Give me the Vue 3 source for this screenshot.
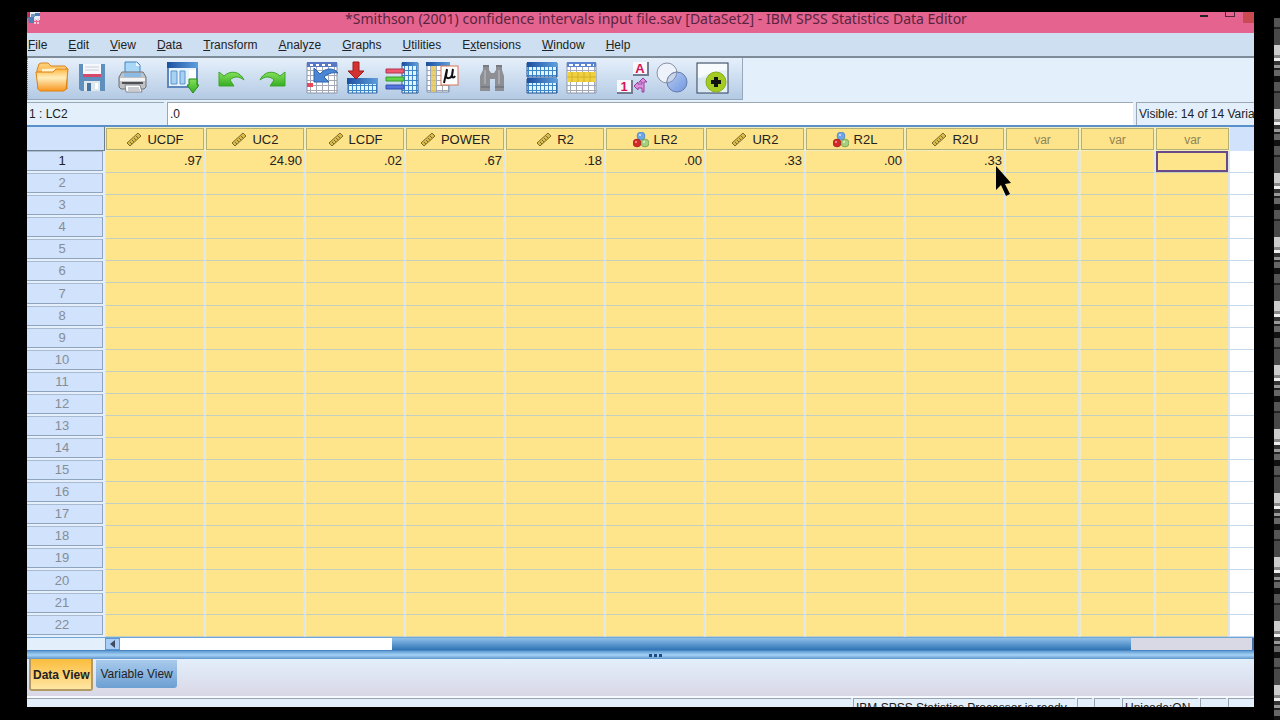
<template>
  <div class="stage">
    <main class="window">
      <header class="title">
        <svg class="title__icon" viewBox="0 0 14 14" aria-hidden="true">
          <rect width="4" height="6" fill="#c22f4c" />
          <rect x="3" width="10" height="8" fill="#e8eef8" />
          <path d="M1 5h6v6H2zM8 1h5v3H8z" fill="#4f7fb5" />
          <path d="M4 2h4v3H4z" fill="#7898c0" />
          <path d="M7 8h6M7 11h6" stroke="#f5c9d8" stroke-width="2" stroke-dasharray="2 1" />
        </svg>
        <h1 class="title__text">
          *Smithson (2001) confidence intervals input file.sav [DataSet2] - IBM SPSS Statistics Data Editor
        </h1>
        <button class="title__button" aria-label="Minimize"><span class="title__min"></span></button>
        <button class="title__button" aria-label="Maximize"><span class="title__max"></span></button>
        <button class="title__close" aria-label="Close"></button>
      </header>

      <nav class="menu">
        <button v-for="m in menus" :key="m.rest" class="menu__item">{{ m.pre }}<u>{{ m.key }}</u>{{ m.rest }}</button>
      </nav>

      <div class="tools">
        <div class="tools__bar">
          <div v-for="(group, g) in tools" :key="g" class="tools__group">
            <button v-for="tool in group" :key="tool.id" class="tools__button" :aria-label="tool.label">
              <svg class="tools__icon" viewBox="0 0 34 34">
                <use :href="`#${tool.id}`" />
              </svg>
            </button>
          </div>
        </div>
      </div>

      <div class="value">
        <label class="value__name" for="cell-value">1 : LC2</label>
        <input id="cell-value" v-model="cellValue" class="value__input" type="text" />
        <span class="value__visible">Visible: 14 of 14 Variables</span>
      </div>

      <table class="grid">
        <colgroup>
          <col class="grid__col-head" />
          <col v-for="c in columns" :key="c.name" class="grid__col" />
          <col v-for="n in 3" :key="n" class="grid__col-var" />
          <col />
        </colgroup>
        <thead>
          <tr>
            <th class="grid__corner"></th>
            <th v-for="c in columns" :key="c.name" class="grid__th" scope="col">
              <span class="grid__label">
                <svg class="grid__icon" viewBox="0 0 16 16" aria-hidden="true">
                  <use :href="c.nominal ? '#nominal' : '#scale'" />
                </svg>
                {{ c.name }}
              </span>
            </th>
            <th v-for="n in 3" :key="n" class="grid__th grid__th--var" scope="col">var</th>
            <th class="grid__th-rest"></th>
          </tr>
        </thead>
        <tbody>
          <tr v-for="row in 22" :key="row">
            <th :class="[{ 'grid__row--active': row === 1 }, 'grid__row']" scope="row">{{ row }}</th>
            <td v-for="(c, i) in columns" :key="c.name" class="grid__td">
              <template v-if="row === 1">{{ c.value }}</template>
              <svg v-if="row === 1 && i === columns.length - 1" class="pointer" viewBox="0 0 16 31" aria-hidden="true">
                <path d="M1 0v24l5-5 5 11 4-2-5-10 6-1z" fill="#000" />
              </svg>
            </td>
            <td v-for="n in 3" :key="n" :class="[{ 'grid__td--selected': row === 1 && n === 3 }, 'grid__td']"></td>
            <td class="grid__rest"></td>
          </tr>
        </tbody>
      </table>

      <div class="scroll">
        <button class="scroll__arrow" aria-label="Scroll left">
          <svg class="scroll__glyph" viewBox="0 0 6 8"><path d="M5 0v8L0 4z" fill="#3e4a5c" /></svg>
        </button>
        <div class="scroll__track"></div>
        <div class="scroll__thumb"></div>
        <div class="scroll__end"></div>
      </div>
      <div class="splitter"><i></i><i></i><i></i></div>

      <div class="tabs">
        <button class="tabs__tab tabs__tab--active">Data View</button>
        <button class="tabs__tab">Variable View</button>
      </div>

      <footer class="status">
        <span class="status__cell status__cell--fill"></span>
        <span class="status__cell status__cell--processor">IBM SPSS Statistics Processor is ready</span>
        <span class="status__cell status__cell--small"></span>
        <span class="status__cell status__cell--medium"></span>
        <span class="status__cell status__cell--unicode">Unicode:ON</span>
        <span class="status__cell status__cell--medium"></span>
        <span class="status__cell status__cell--medium"></span>
      </footer>
    </main>
    <div class="strip"></div>

    <svg class="defs" aria-hidden="true">
      <defs>
        <linearGradient id="g-folder" x2="0" y2="1">
          <stop stop-color="#ffd27a" />
          <stop offset="1" stop-color="#f58a12" />
        </linearGradient>
        <linearGradient id="g-front" x2="0" y2="1">
          <stop stop-color="#ffb640" />
          <stop offset="0.4" stop-color="#ffeebc" />
          <stop offset="1" stop-color="#f9961f" />
        </linearGradient>
        <linearGradient id="g-head" x2="1" y2="0">
          <stop stop-color="#1c4f9f" />
          <stop offset="1" stop-color="#5f9fdd" />
        </linearGradient>
        <linearGradient id="g-green" x2="0" y2="1">
          <stop stop-color="#86e05a" />
          <stop offset="1" stop-color="#35ae22" />
        </linearGradient>
        <linearGradient id="g-circle" x2="1" y2="1">
          <stop stop-color="#b9cdf2" />
          <stop offset="1" stop-color="#6f97e0" />
        </linearGradient>
        <pattern id="p-blue" width="4" height="5" patternUnits="userSpaceOnUse">
          <rect width="4" height="5" fill="#3f86c9" />
          <rect width="3" height="4" fill="#e3f3ff" />
        </pattern>
        <pattern id="p-gray" width="6" height="5" patternUnits="userSpaceOnUse">
          <rect width="6" height="5" fill="#a3a9b6" />
          <rect width="5" height="4" fill="#fff" />
        </pattern>

        <symbol id="open" viewBox="0 0 34 34">
          <path d="M2 9l2-6 2-1h7l3 3h14l2 2v21H3z" fill="url(#g-folder)" stroke="#d9861d" />
          <path d="M7 8l23-1v5H7z" fill="#fff3cf" />
          <path d="M1 11h17l3-3h12l-2 20-2 2H5l-2-2z" fill="url(#g-front)" stroke="#dc8213" />
        </symbol>
        <symbol id="save" viewBox="0 0 34 34">
          <path d="M4 3h26v27H6l-2-2z" fill="#5e8fbd" />
          <path d="M8 3h18v11H8z" fill="#f6f8fc" />
          <path d="M10 6h14M10 9h14" stroke="#c6ccd8" />
          <path d="M8 13h18v3H8z" fill="#d8486a" />
          <path d="M9 20h16v10H9z" fill="#dfe8ee" />
          <path d="M12 22h4v8h-4z" fill="#47759f" />
          <path d="M20 22h3v6h-3z" fill="#fff" />
        </symbol>
        <symbol id="print" viewBox="0 0 34 34">
          <path d="M10 14V1h12l3 3v10z" fill="#a9d7f8" stroke="#4383bd" />
          <path d="M21 1v4h4" fill="#eef8ff" />
          <path d="M7 11h21l3 5v10l-2 2H6l-2-2V16z" fill="#bfc1c5" stroke="#6e7075" />
          <path d="M9 12h17v4H9z" fill="#8bbbe3" />
          <path d="M5 17h25v3H5z" fill="#f5f5f5" />
          <path d="M7 22h21" stroke="#4e5055" stroke-width="2" />
          <path d="M10 24h15l2 7H11z" fill="#fff" stroke="#85878c" />
          <path d="M13 27h11M13 29h12" stroke="#9a9ca2" />
        </symbol>
        <symbol id="recall" viewBox="0 0 34 34">
          <path d="M3 2h29v24H3z" fill="#e8f3fd" stroke="#5e88bd" stroke-width="2" />
          <path d="M2 1h31v6H2z" fill="url(#g-head)" />
          <path d="M6 10h6v13H6zM15 10h5v13h-5z" fill="#a7d0f1" stroke="#5c95cd" />
          <path d="M24 9h7v8h-7z" fill="#fff" />
          <path d="M24 18h8v6h2l-6 8-6-8h2z" fill="url(#g-green)" stroke="#288a1c" />
        </symbol>
        <symbol id="undo" viewBox="0 0 34 34">
          <path d="M4 11l5 4c6-6 16-5 20 4-5-4-10-4-14 0l4 6H4z" fill="url(#g-green)" stroke="#3da52b" />
        </symbol>
        <symbol id="redo" viewBox="0 0 34 34">
          <path d="M30 11l-5 4C19 9 9 10 5 19c5-4 10-4 14 0l-4 6h15z" fill="url(#g-green)" stroke="#3da52b" />
        </symbol>
        <symbol id="goto-case" viewBox="0 0 34 34">
          <path d="M2 2h30v30H2z" fill="url(#p-gray)" stroke="#8d96a8" />
          <path d="M2 1h30v5H2z" fill="#5678c5" />
          <path d="M5 4h24" stroke="#fff" stroke-width="2" stroke-dasharray="3 3" />
          <path d="M2 22h6v4H2z" fill="#e8485c" />
          <path d="M9 7v14h15l-5-5c3-3 8-5 14-4-5-6-13-5-18 1z" fill="#4a86d3" stroke="#2c62ae" />
        </symbol>
        <symbol id="goto-variable" viewBox="0 0 34 34">
          <path d="M3 18h29v14H3z" fill="url(#p-blue)" stroke="#3a6ca8" />
          <path d="M2 17h31v6H2z" fill="url(#g-head)" />
          <path d="M8 1h6v9h5l-8 8-8-8h5z" fill="#d43131" stroke="#9e1c1c" />
        </symbol>
        <symbol id="variables" viewBox="0 0 34 34">
          <path d="M17 2h16v30H17z" fill="url(#p-blue)" stroke="#35598a" />
          <path d="M17 1h16v4H17z" fill="url(#g-head)" />
          <path d="M1 8h18v4H1z" fill="#ee5970" stroke="#b53351" />
          <path d="M1 16h18v4H1z" fill="#62d24a" stroke="#3a9a2b" />
          <path d="M1 24h18v4H1z" fill="#5375dc" stroke="#324fad" />
        </symbol>
        <symbol id="statistics" viewBox="0 0 34 34">
          <path d="M2 2h22v29H2z" fill="url(#p-gray)" stroke="#8090aa" />
          <path d="M6 5h5v26H6z" fill="#e5c34d" opacity="0.8" />
          <path d="M1 1h24v4H1z" fill="url(#g-head)" />
          <rect x="16" y="5" width="17" height="19" fill="#fff" stroke="#df7253" />
          <path d="M22 8l-3 14M22 9l-1 6c0 3 5 3 6-1l1-6-1 7c0 2 2 2 3 0" fill="none" stroke="#111" stroke-width="2" />
        </symbol>
        <symbol id="find" viewBox="0 0 34 34">
          <path d="M8 4h6v5l2 3h3l2-3V4h6v5l2 6v15h-9V18h-5v12H5V15l3-6z" fill="#8d8f94" />
          <path d="M8 5h6M21 5h6M6 26h9M20 26h9" stroke="#787b81" stroke-width="2" />
          <path d="M10 9v14M24 9v14" stroke="#a7a9ad" stroke-width="2" />
        </symbol>
        <symbol id="split" viewBox="0 0 34 34">
          <path d="M2 2h30v14H2zM2 18h30v14H2z" fill="url(#p-blue)" stroke="#24518f" />
          <path d="M2 1h30v5H2zM2 17h30v5H2z" fill="url(#g-head)" />
        </symbol>
        <symbol id="weight" viewBox="0 0 34 34">
          <path d="M2 2h29v30H2z" fill="url(#p-gray)" stroke="#8d96a8" />
          <path d="M2 1h29v5H2z" fill="#5b84d2" />
          <path d="M4 4h25" stroke="#fff" stroke-width="2" stroke-dasharray="4 2" />
          <path d="M2 11h29v10H2z" fill="#efd03e" />
          <path d="M7 11v10M13 11v10M19 11v10M25 11v10M2 16h29" stroke="#d3b02d" />
        </symbol>
        <symbol id="labels" viewBox="0 0 34 34">
          <path d="M18 1h15v13H18zM2 19h15v13H2z" fill="#f8f8fc" />
          <path d="M18 14h15V1M2 32h15V19" fill="none" stroke="#747c92" stroke-width="2" />
          <text x="25" y="12" class="labels__glyph">A</text>
          <text x="9" y="30" class="labels__glyph">1</text>
          <path d="M28 17l4 4h-3v10h-2v-4h-4v2l-4-4 4-4v2h4v-2h-3z" fill="#dd8edc" stroke="#9b3f9f" />
        </symbol>
        <symbol id="sets" viewBox="0 0 34 34">
          <circle cx="12" cy="12" r="10" fill="#eef2fa" stroke="#8c929f" />
          <circle cx="22" cy="21" r="10" fill="url(#g-circle)" stroke="#6279ac" />
          <path d="M12 20c1-5 4-8 10-9-1 6-4 10-10 11z" fill="#cbd6ec" stroke="#7c8bab" />
        </symbol>
        <symbol id="show-all" viewBox="0 0 34 34">
          <rect x="2" y="2" width="31" height="30" fill="#e6f0f8" stroke="#2f3f55" />
          <path d="M3 3h29v6c-12 0-18 4-29 8z" fill="#f7fbfe" />
          <path d="M3 17h12v14H3z" fill="#d8e7f2" />
          <circle cx="21" cy="21" r="10" fill="#a4cb21" stroke="#86ad18" />
          <path d="M21 16v10M16 21h10" stroke="#111" stroke-width="4" />
        </symbol>

        <symbol id="scale" viewBox="0 0 16 16">
          <path d="M1 11L12 1l3 3L4 14z" fill="#dcbc48" stroke="#7d6a2c" />
          <path d="M4 10l2 2M6 8l2 2M8 6l2 2M10 4l2 2" stroke="#7d6a2c" />
        </symbol>
        <symbol id="nominal" viewBox="0 0 16 16">
          <circle cx="8" cy="4" r="4" fill="#6ea6e6" stroke="#3f70ae" stroke-width="0.5" />
          <circle cx="4" cy="11" r="4" fill="#d22a2a" stroke="#8b1616" stroke-width="0.5" />
          <circle cx="12" cy="11" r="4" fill="#a4cf7c" stroke="#557f35" stroke-width="0.5" />
          <circle cx="7" cy="3" r="1" fill="#d5e8ff" />
          <circle cx="3" cy="10" r="1" fill="#ff9d9d" />
          <circle cx="11" cy="10" r="1" fill="#e2f6cc" />
        </symbol>
      </defs>
    </svg>
  </div>
</template>

<script setup>
import { ref } from "vue";

const cellValue = ref(".0");

const menus = [
  { pre: "", key: "F", rest: "ile" },
  { pre: "", key: "E", rest: "dit" },
  { pre: "", key: "V", rest: "iew" },
  { pre: "", key: "D", rest: "ata" },
  { pre: "", key: "T", rest: "ransform" },
  { pre: "", key: "A", rest: "nalyze" },
  { pre: "", key: "G", rest: "raphs" },
  { pre: "", key: "U", rest: "tilities" },
  { pre: "E", key: "x", rest: "tensions" },
  { pre: "", key: "W", rest: "indow" },
  { pre: "", key: "H", rest: "elp" },
];

const tools = [
  [
    { id: "open", label: "Open" },
    { id: "save", label: "Save" },
    { id: "print", label: "Print" },
  ],
  [{ id: "recall", label: "Recall recent dialogs" }],
  [
    { id: "undo", label: "Undo" },
    { id: "redo", label: "Redo" },
  ],
  [
    { id: "goto-case", label: "Go to case" },
    { id: "goto-variable", label: "Go to variable" },
    { id: "variables", label: "Variables" },
    { id: "statistics", label: "Descriptive statistics" },
  ],
  [{ id: "find", label: "Find" }],
  [
    { id: "split", label: "Split file" },
    { id: "weight", label: "Select cases" },
  ],
  [
    { id: "labels", label: "Value labels" },
    { id: "sets", label: "Use variable sets" },
    { id: "show-all", label: "Customize toolbar" },
  ],
];

const columns = [
  { name: "UCDF", value: ".97" },
  { name: "UC2", value: "24.90" },
  { name: "LCDF", value: ".02" },
  { name: "POWER", value: ".67" },
  { name: "R2", value: ".18" },
  { name: "LR2", value: ".00", nominal: true },
  { name: "UR2", value: ".33" },
  { name: "R2L", value: ".00", nominal: true },
  { name: "R2U", value: ".33" },
];
</script>

<style>
body {
  background: #000;
  margin: 0;
}
</style>

<style scoped>
.stage {
  background: #000;
  box-sizing: border-box;
  color: #222;
  display: flex;
  font-family: "Liberation Sans", Arial, sans-serif;
  font-size: 12px;
  gap: 20px;
  min-height: 100vh;
}

button {
  background: none;
  border: 0;
  color: inherit;
  font: inherit;
  margin: 0;
  padding: 0;
}

.defs {
  height: 0;
  position: absolute;
  width: 0;
}

.window {
  background: #e3effb;
  display: flex;
  flex: 1;
  flex-direction: column;
  margin: 12px 0 13px 27px;
  min-width: 0;
  overflow: hidden;
}

.strip {
  background: repeating-linear-gradient(
    #555 0 9px, #222 9px 11px, #484848 11px 27px, #ccc 27px 37px, #888 37px 40px,
    #eee 40px 43px, #333 43px 47px, #999 47px 50px, #222 50px 52px, #666 52px 58px, #111 58px 64px
  );
  margin-top: 18px;
  width: 6px;
}

.title {
  align-items: flex-start;
  background: #e4638f;
  display: flex;
  height: 21px;
}

.title__icon {
  height: 14px;
  width: 14px;
}

.title__text {
  color: #5a2340;
  flex: 1;
  font-family: "Noto Sans", "Open Sans", sans-serif;
  font-size: 14px;
  font-weight: 400;
  line-height: 13px;
  margin: 0;
  padding-left: 80px;
  text-align: center;
  white-space: nowrap;
}

.title__button {
  display: flex;
  height: 10px;
  justify-content: center;
  width: 26px;
}

.title__min {
  background: #222;
  height: 2px;
  margin-top: 3px;
  width: 8px;
}

.title__max {
  border: 1px solid #5a2340;
  border-top: 0;
  height: 4px;
  width: 8px;
}

.title__close {
  background: #c94a50;
  height: 11px;
  width: 11px;
}

.menu {
  background: #cddff1;
  border-bottom: 2px solid #7e8b98;
  display: flex;
  gap: 21px;
  padding: 2px 0 0 1px;
}

.menu__item {
  line-height: 21px;
}

.tools {
  display: flex;
  padding-bottom: 2px;
}

.tools__bar {
  background: linear-gradient(#e6f0fb, #b3cae4);
  border-bottom: 1px solid #98a8ba;
  border-left: 1px dotted #7f8fa2;
  border-right: 1px solid #98a8ba;
  display: flex;
  gap: 10px;
  padding: 0 10px 1px 4px;
}

.tools__group {
  display: flex;
}

.tools__button {
  align-items: center;
  display: flex;
  height: 40px;
  justify-content: center;
  width: 40px;
}

.tools__icon {
  height: 34px;
  width: 34px;
}

.labels__glyph {
  fill: #d3135a;
  font-size: 13px;
  font-weight: 700;
  text-anchor: middle;
}

.value {
  border-bottom: 2px solid #5b8fc8;
  display: flex;
  line-height: 22px;
  white-space: nowrap;
}

.value__name {
  border-top: 1px solid #9aa7b5;
  padding-left: 2px;
  width: 135px;
}

.value__input {
  background: #fff;
  border: 1px solid #9aa7b5;
  border-bottom: 0;
  border-right: 0;
  color: inherit;
  flex: 1;
  font: inherit;
  margin: 0 3px;
  min-width: 0;
  padding: 0 2px;
}

.value__visible {
  border: 1px solid #9aa7b5;
  border-bottom: 0;
  border-right: 0;
  overflow: hidden;
  padding-left: 2px;
  width: 115px;
}

.grid {
  border-collapse: separate;
  border-spacing: 0;
  flex: 1;
  font-size: 13px;
  table-layout: fixed;
  width: 100%;
}

.grid__col-head {
  width: 78px;
}

.grid__col {
  width: 100px;
}

.grid__col-var {
  width: 75px;
}

.grid th,
.grid td {
  font-weight: 400;
  line-height: 18px;
  padding: 0;
}

.grid thead th {
  height: 22px;
}

.grid__corner,
.grid__th-rest {
  background: #d0e2fc;
}

.grid__corner {
  border-bottom: 1px solid #6f7f90;
  border-right: 1px solid #6f7f90;
}

.grid__th {
  background: #fde38a;
  box-shadow: inset 0 0 0 1px #f3edc2, inset 0 0 0 2px #b5b074;
  text-align: center;
}

.grid .grid__th {
  padding-top: 2px;
}

.grid__th--var {
  color: #8f8455;
  font-size: 12px;
}

.grid__label {
  align-items: center;
  display: flex;
  gap: 5px;
  justify-content: center;
}

.grid__icon {
  height: 16px;
  width: 16px;
}

.grid__row {
  background: #d0e2fc;
  box-shadow: inset -2px -2px 0 #e4effb, inset -3px -3px 0 #8fa5be, inset 0 1px 0 #a9bbd0;
  color: #868d96;
  text-align: center;
}

.grid .grid__row {
  padding: 0 8px 2px 0;
}

.grid .grid__row--active {
  color: #222;
}

.grid__td {
  background: #fee48b;
  border-bottom: 1px solid #c3cfc0;
  border-left: 1px solid #f0ebc4;
  border-right: 2px solid #dfe6ea;
  position: relative;
  text-align: right;
}

.grid .grid__td {
  padding: 0 1px 1px 0;
}

.grid__td--selected {
  box-shadow: inset 0 0 0 2px #6a4a86;
}

.grid__rest {
  background: #fff;
  border-bottom: 1px solid #c4d9ee;
}

.pointer {
  height: 31px;
  position: absolute;
  right: -8px;
  top: 15px;
  width: 16px;
  z-index: 1;
}

.scroll {
  border-bottom: 1px solid #4a86c4;
  border-top: 1px solid #6fa6d8;
  display: flex;
  height: 12px;
  padding-left: 78px;
}

.scroll__arrow {
  align-items: center;
  background: #a9cdf5;
  border: 1px solid #5e97d6;
  box-sizing: border-box;
  display: flex;
  justify-content: center;
  width: 15px;
}

.scroll__glyph {
  height: 8px;
  width: 6px;
}

.scroll__track {
  background: #fff;
  flex: 272;
}

.scroll__thumb {
  background: linear-gradient(#8fc0ea, #2f74b5);
  flex: 739;
}

.scroll__end {
  background: #d9d8e5;
  border-right: 2px solid #3d6ea8;
  flex: 121;
}

.splitter {
  align-items: center;
  background: linear-gradient(#5f9bd3, #a5d2f5 50%, #5f94cb);
  display: flex;
  gap: 2px;
  height: 8px;
  justify-content: center;
  padding-left: 29px;
}

.splitter i {
  background: #1d4b86;
  height: 3px;
  width: 3px;
}

.tabs {
  align-items: flex-start;
  background: linear-gradient(#e3effb, #d9d7e6);
  border-bottom: 2px solid #f6f9fd;
  display: flex;
  gap: 3px;
  height: 37px;
  padding-left: 2px;
}

.tabs__tab {
  background: linear-gradient(#a9cbed, #6c9fd2);
  border-radius: 0 0 3px 3px;
  line-height: 28px;
  margin-top: 1px;
  padding: 0 4px;
}

.tabs__tab--active {
  background: linear-gradient(#fbbd3c, #fee6a3);
  border: 2px solid #b29a62;
  border-top: 0;
  font-weight: 700;
  margin-top: 0;
  padding: 2px 2px 0;
}

.status {
  display: flex;
  gap: 2px;
  height: 9px;
  line-height: 18px;
  overflow: hidden;
  white-space: nowrap;
}

.status__cell {
  border: 1px solid #98a3b0;
  border-bottom: 0;
  border-right: 0;
  box-sizing: border-box;
  padding-left: 2px;
}

.status__cell--fill {
  border-left: 0;
  flex: 1;
}

.status__cell--processor {
  width: 222px;
}

.status__cell--small {
  width: 15px;
}

.status__cell--medium {
  width: 26px;
}

.status__cell--unicode {
  width: 76px;
}
</style>
